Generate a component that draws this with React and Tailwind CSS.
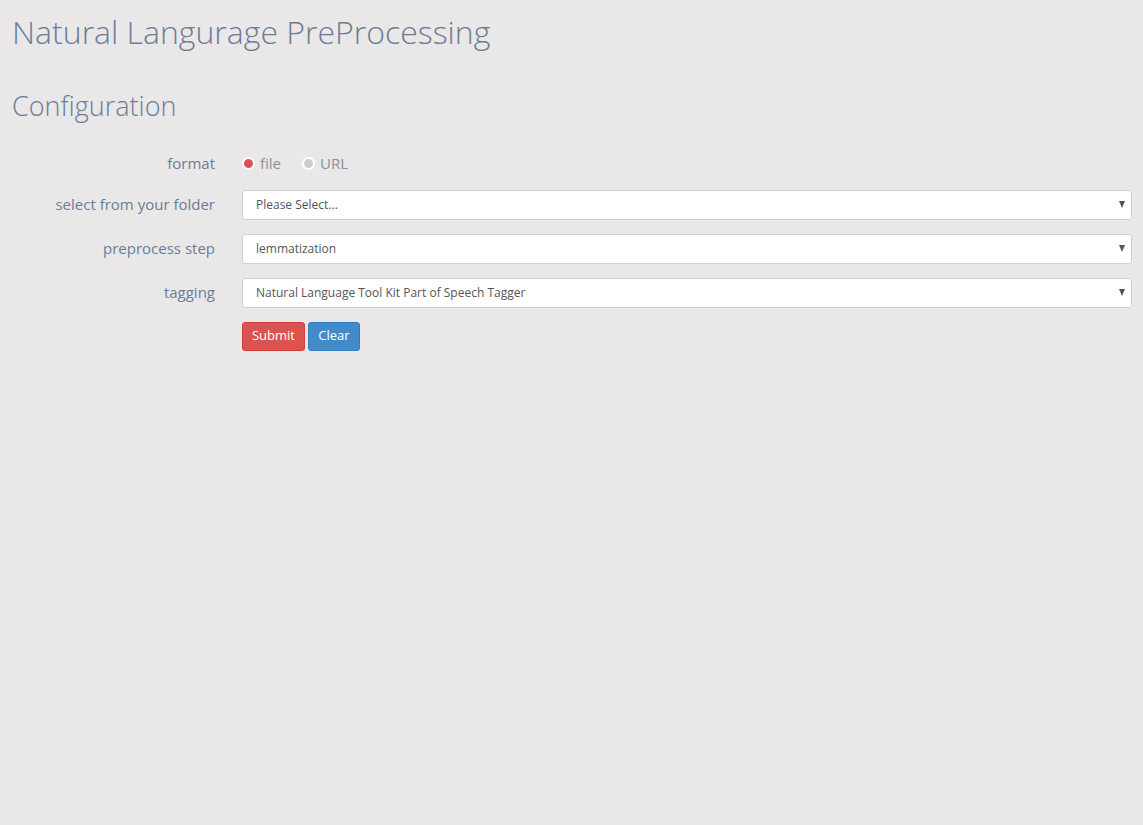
import React, { useState } from "react";

const Row = ({ label, children }) => (
  <div className="flex items-center">
    <label className="w-[203px] shrink-0 text-right text-[15px] text-[#6b7d96]">
      {label}
    </label>
    <div className="ml-[27px] flex-1">{children}</div>
  </div>
);

const Select = ({ value }) => (
  <div className="relative flex h-[30px] items-center rounded-[3px] border border-[#cfcfcf] bg-white pl-[13px] text-[12px] text-[#555]">
    <span>{value}</span>
    <span className="absolute right-[6px] top-[10px] h-0 w-0 border-x-[3.5px] border-t-[7px] border-x-transparent border-t-[#555]" />
  </div>
);

const Radio = ({ checked, label, onClick }) => (
  <button type="button" onClick={onClick} className="flex items-center gap-[5px] text-[15px] text-[#8a8f99]">
    <span
      className={
        "h-[13px] w-[13px] rounded-full border-2 border-white " +
        (checked ? "bg-[#d9534f]" : "bg-[#cccccc]")
      }
    />
    <span className="-mt-px">{label}</span>
  </button>
);

export default function App() {
  const [format, setFormat] = useState("file");

  return (
    <div
      className="min-h-[825px] bg-[#e9e7e8] pl-[12px] pr-[11px] pb-10 text-[#6b7d96]"
      style={{ fontFamily: '"Open Sans", "Noto Sans", sans-serif' }}
    >
      {/* Title */}
      <h1 className="pt-[11px] text-[32px] font-light leading-[42px]">
        Natural Langurage PreProcessing
      </h1>

      {/* Config section */}
      <h2 className="mt-[36px] text-[27px] font-light leading-[34px]">Configuration</h2>

      <div className="mt-[29px] flex flex-col">
        <Row label="format">
          <div className="flex h-[22px] items-center gap-[21px]">
            <Radio checked={format === "file"} label="file" onClick={() => setFormat("file")} />
            <Radio checked={format === "url"} label="URL" onClick={() => setFormat("url")} />
          </div>
        </Row>
        <div className="mt-[15px] flex flex-col gap-[14px]">
          <Row label="select from your folder">
            <Select value="Please Select..." />
          </Row>
          <Row label="preprocess step">
            <Select value="lemmatization" />
          </Row>
          <Row label="tagging">
            <Select value="Natural Language Tool Kit Part of Speech Tagger" />
          </Row>
        </div>
        <div className="ml-[230px] mt-[14px] flex gap-[3px]">
          <button className="h-[29px] w-[63px] rounded-[3px] border border-[#d43f3a] bg-[#d9534f] text-[13px] text-white">
            Submit
          </button>
          <button className="h-[29px] w-[52px] rounded-[3px] border border-[#357ebd] bg-[#428bca] text-[13px] text-white">
            Clear
          </button>
        </div>
      </div>
    </div>
  );
}
